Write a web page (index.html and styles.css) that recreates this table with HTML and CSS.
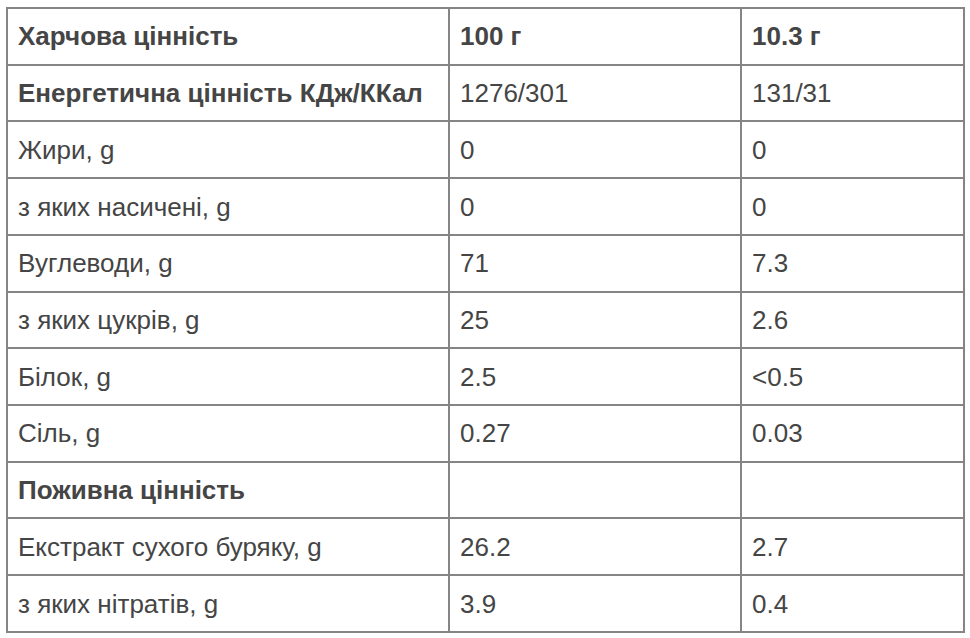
FILE: index.html
```html
<!DOCTYPE html>
<html lang="uk">
<head>
<meta charset="utf-8">
<title>Харчова цінність</title>
<link rel="stylesheet" href="styles.css">
</head>
<body>
<table class="nutrition">
  <colgroup>
    <col class="c1">
    <col class="c2">
    <col class="c3">
  </colgroup>
  <tr class="head"><td>Харчова цінність</td><td>100 г</td><td>10.3 г</td></tr>
  <tr><td class="b">Енергетична цінність КДж/ККал</td><td>1276/301</td><td>131/31</td></tr>
  <tr><td>Жири, g</td><td>0</td><td>0</td></tr>
  <tr><td>з яких насичені, g</td><td>0</td><td>0</td></tr>
  <tr><td>Вуглеводи, g</td><td>71</td><td>7.3</td></tr>
  <tr><td>з яких цукрів, g</td><td>25</td><td>2.6</td></tr>
  <tr><td>Білок, g</td><td>2.5</td><td>&lt;0.5</td></tr>
  <tr><td>Сіль, g</td><td>0.27</td><td>0.03</td></tr>
  <tr><td class="b">Поживна цінність</td><td></td><td></td></tr>
  <tr><td>Екстракт сухого буряку, g</td><td>26.2</td><td>2.7</td></tr>
  <tr><td>з яких нітратів, g</td><td>3.9</td><td>0.4</td></tr>
</table>
</body>
</html>
```
FILE: styles.css
```css
html, body {
  margin: 0;
  background: #ffffff;
}
body {
  padding: 7px 6px;
  font-family: "Liberation Sans", Arial, sans-serif;
  font-size: 26px;
  color: #454545;
}
.nutrition {
  border-collapse: collapse;
  width: 957px;
  height: 626px;
  table-layout: fixed;
}
.c1 { width: 442px; }
.c2 { width: 292px; }
.c3 { width: 223px; }
.nutrition td {
  border: 2px solid #858585;
  padding: 0 10px;
  line-height: 30px;
  vertical-align: middle;
}
.head td, .nutrition td.b {
  font-weight: bold;
}
```
